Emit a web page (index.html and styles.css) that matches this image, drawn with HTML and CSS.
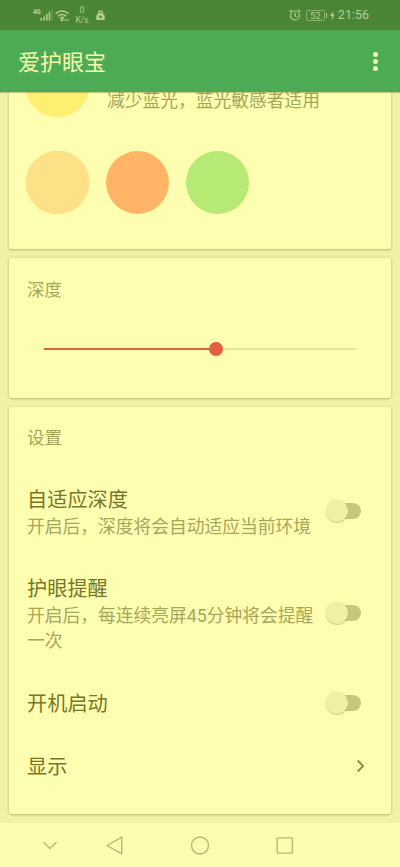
FILE: index.html
```html
<!DOCTYPE html>
<html lang="zh-CN">
<head>
<meta charset="utf-8">
<title>爱护眼宝</title>
<link rel="stylesheet" href="styles.css">
</head>
<body>
<div class="phone">
  <header class="status">
    <div class="status-left">
      <span class="net">4G</span>
      <svg class="signal" width="13" height="12" viewBox="0 0 13 12"><path d="M1.2 9v2.4M4 7.5v3.9M6.8 5v6.4M9.5 2.5v8.9" stroke="#b5cf92" stroke-width="1.6"/><path d="M12 0.5v10.9" stroke="#6c9b50" stroke-width="1.3"/></svg>
      <svg class="wifi" width="15" height="13" viewBox="0 0 15 13" fill="none" stroke="#b5cf92" stroke-width="1.5"><path d="M.8 4.6a9.2 9.2 0 0 1 12.6 0M3 7.1a6 6 0 0 1 8.2 0M5 9.4a3 3 0 0 1 4.2 0"/><circle cx="7.1" cy="11" r=".6"/><path d="M9.6 11h1.6M12 11h1.6"/></svg>
      <div class="speed"><span>0</span><span>K/s</span></div>
      <svg class="bag" width="9" height="11" viewBox="0 0 9 11"><path d="M2.9 3.6V1.2h3.2v2.4" fill="none" stroke="#b5cf92" stroke-width="1.2"/><path d="M2 3h5l.8 2h.9v5H.3V5h.9z" fill="#b5cf92"/><circle cx="4.5" cy="6.8" r="1.4" fill="#4b8636"/></svg>
    </div>
    <div class="status-right">
      <svg class="alarm" width="12" height="12" viewBox="0 0 12 12" fill="none" stroke="#b5cf92" stroke-width="1.2"><circle cx="6" cy="6.5" r="4.5"/><path d="M6 3.8v2.9l1.8 1.2M.6 2.7 2.8.8M11.4 2.7 9.2.8"/></svg>
      <span class="battery">52</span>
      <svg class="bolt" width="5" height="9" viewBox="0 0 5 9"><path d="M3 0 .2 5h1.9L1.6 9 4.8 3.6H2.7z" fill="#b5cf92"/></svg>
      <span class="clock">21:56</span>
    </div>
  </header>
  <div class="appbar">
    <h1>爱护眼宝</h1>
    <div class="more"><i></i><i></i><i></i></div>
  </div>
  <main>
    <section class="card colors">
      <div class="filter">
        <span class="dot yellow"></span>
        <p class="desc">减少蓝光，蓝光敏感者适用</p>
      </div>
      <div class="dots">
        <span class="dot sand"></span><span class="dot orange"></span><span class="dot green"></span>
      </div>
    </section>
    <section class="card depth">
      <h2>深度</h2>
      <div class="slider"><div class="filled"></div><div class="thumb"></div><div class="rest"></div></div>
    </section>
    <section class="card settings">
      <h2>设置</h2>
      <div class="row adaptive">
        <div class="label"><h3>自适应深度</h3><p class="desc">开启后，深度将会自动适应当前环境</p></div>
        <div class="switch"></div>
      </div>
      <div class="row remind">
        <div class="label"><h3>护眼提醒</h3><p class="desc">开启后，每连续亮屏45分钟将会提醒<br>一次</p></div>
        <div class="switch"></div>
      </div>
      <div class="row boot">
        <h3>开机启动</h3>
        <div class="switch"></div>
      </div>
      <div class="row display">
        <h3>显示</h3>
        <svg class="chevron" width="10" height="14" viewBox="0 0 10 14"><path d="M1.7 1.5 7 7l-5.3 5.5" fill="none" stroke="#918f48" stroke-width="2"/></svg>
      </div>
    </section>
  </main>
  <nav>
    <svg width="400" height="45" viewBox="0 0 400 45" fill="none" stroke="#b9b776" stroke-width="1.4" stroke-linejoin="round">
      <path d="M43.5 19.2l6.5 6.3 6.5-6.3"/>
      <path d="M121.7 14.2v16.6L107 22.5z"/>
      <circle cx="200" cy="22.5" r="8.5"/>
      <rect x="277.2" y="14.9" width="15.2" height="15.2" rx=".8"/>
    </svg>
  </nav>
</div>
</body>
</html>
```
FILE: styles.css
```css
* { box-sizing: border-box; margin: 0; padding: 0; }

body {
  background: #f0f0a6;
  font-family: Roboto, "Noto Sans CJK SC", sans-serif;
}

svg { display: block; flex: none; }

.phone {
  width: 400px;
  height: 867px;
  display: flex;
  flex-direction: column;
  overflow: hidden;
}

.status {
  flex: none;
  height: 30px;
  display: flex;
  justify-content: space-between;
  padding: 0 31px 0 33px;
  background: #4b8636;
  color: #b5cf92;
}

.status-left, .status-right { display: flex; align-items: center; }
.net { font-size: 6.5px; line-height: 8px; font-weight: 700; margin-bottom: 7px; width: 7px; letter-spacing: -.4px; }
.wifi { margin-left: 2px; }
.speed {
  width: 14px;
  margin-left: 5px;
  display: flex;
  flex-direction: column;
  align-items: center;
  font-size: 8.5px;
  line-height: 10px;
}
.bag { margin-left: 7px; }
.battery {
  position: relative;
  width: 19px;
  height: 11px;
  margin-left: 5px;
  border: 1px solid #8bb26e;
  border-radius: 2px;
  font-size: 9.5px;
  line-height: 9.5px;
  text-align: center;
}
.battery::after {
  content: "";
  position: absolute;
  left: 19px;
  top: 2px;
  width: 1.5px;
  height: 5px;
  background: #b5cf92;
}
.bolt { margin-left: 5px; }
.clock { margin-left: 3px; font-size: 12.5px; line-height: 16px; }

.appbar {
  flex: none;
  height: 62px;
  display: flex;
  align-items: center;
  justify-content: space-between;
  padding: 0 22px 0 18px;
  background: #4dab56;
  color: #f7f9ad;
  position: relative;
  z-index: 1;
  box-shadow: 0 1px 1px rgba(110, 150, 50, .45);
}
.appbar h1 { font-size: 22px; line-height: 30px; font-weight: 400; padding-top: 3px; }
.more { display: flex; flex-direction: column; gap: 2px; }
.more i { width: 5px; height: 5px; border-radius: 50%; background: #f7f9ad; }

main {
  flex: none;
  height: 730.5px;
  padding: 0 9px;
  display: flex;
  flex-direction: column;
  gap: 9px;
}
.card {
  flex: none;
  background: #fefeb1;
  border-radius: 2px;
  padding: 0 18px;
  box-shadow: 0 1px 2px rgba(130, 130, 40, .4), 0 0 3px rgba(130, 130, 40, .18);
}
.colors { height: 157px; padding-left: 17px; border-radius: 0 0 2px 2px; }
.filter { display: flex; height: 59.3px; }
.filter .dot { margin-top: -38px; }
.filter .desc { margin: -3px 0 0 18px; }
.dots { display: flex; gap: 17px; }
.dot { flex: none; width: 63px; height: 63px; border-radius: 50%; }
.yellow { background: #fdf070; box-shadow: 0 0 1px #e8df72; }
.sand { background: #fee087; box-shadow: 0 0 1px #e8cf75; }
.orange { background: #ffb565; }
.green { background: #b7ea74; }

.desc { font-size: 17.75px; line-height: 25.6px; color: #a6a65b; white-space: nowrap; }
h2 { font-size: 17.5px; line-height: 26px; font-weight: 400; color: #a6a65b; }
h3 { font-size: 20.2px; line-height: 30px; font-weight: 400; color: #787725; }

.depth { height: 140px; padding-top: 19px; }
.slider { display: flex; align-items: center; height: 14px; margin: 39px 17px 0; }
.filled { width: 165px; height: 2px; background: #d9653f; }
.thumb { width: 13.5px; height: 13.5px; border-radius: 50%; background: #e35f43; }
.rest { flex: 1; height: 2px; margin-left: 1px; background: #e4e49a; }

.settings { height: 406.5px; padding-top: 18px; }
.row { display: flex; justify-content: space-between; align-items: center; }
.adaptive { margin-top: 34px; }
.remind { margin-top: 34px; }
.boot { margin-top: 34px; }
.display { margin-top: 33px; }
.label { width: 290px; }
.label h3 { line-height: 30px; }
.label .desc { margin-top: -.4px; }

.switch {
  position: relative;
  flex: none;
  width: 30px;
  height: 16px;
  margin-right: 12px;
  margin-top: -3px;
  border-radius: 8px;
  background: #c8c77d;
}
.switch::before {
  content: "";
  position: absolute;
  left: -5px;
  top: -3px;
  width: 22px;
  height: 22px;
  border-radius: 50%;
  background: #f0f0a5;
  box-shadow: 0 1px 1px rgba(140, 140, 50, .4), 0 0 1px rgba(140, 140, 50, .25);
}
.chevron { margin: -3px 7.5px 0 0; }

nav { flex: none; height: 44.5px; background: #fdfdb0; position: relative; }
```
